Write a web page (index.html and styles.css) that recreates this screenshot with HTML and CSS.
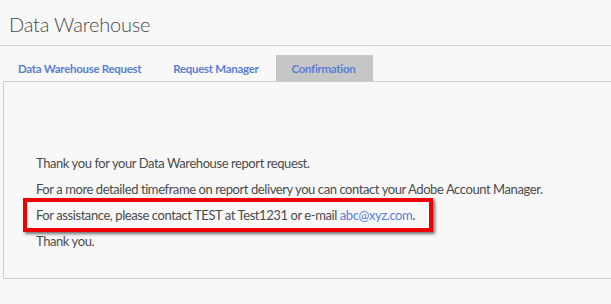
FILE: index.html
```html
<!DOCTYPE html>
<html lang="en">
<head>
    <meta charset="UTF-8">
    <title>Data Warehouse</title>
    <link rel="stylesheet" href="styles.css">
</head>
<body>
    <h1 class="page-title">Data Warehouse</h1>
    <div class="tabs">
        <a class="tab">Data Warehouse Request</a>
        <a class="tab">Request Manager</a>
        <a class="tab active">Confirmation</a>
    </div>
    <div class="panel">
        <p>Thank you for your Data Warehouse report request.</p>
        <p>For a more detailed timeframe on report delivery you can contact your Adobe Account Manager.</p>
        <p class="highlight">For assistance, please contact TEST at Test1231 or e-mail <a href="#" class="mail">abc@xyz.com</a>.</p>
        <p>Thank you.</p>
    </div>
</body>
</html>
```

FILE: styles.css
```css
body {
    margin: 0;
    background-color: #f8f8f8;
    font-family: Lato, "Open Sans", sans-serif;
    color: #4b4b4b;
}
.page-title {
    margin: 0;
    height: 46px;
    padding: 12px 0 0 9px;
    box-sizing: border-box;
    font-size: 20px;
    font-weight: 300;
    letter-spacing: -0.2px;
    border-bottom: 1px solid #d3d3d3;
}
.tabs {
    display: flex;
    height: 26px;
    margin-top: 9px;
    padding-left: 2px;
}
.tab {
    display: block;
    padding: 0 16px;
    line-height: 27px;
    font-size: 11.5px;
    font-weight: bold;
    letter-spacing: -0.3px;
    color: #5b7fd4;
    cursor: pointer;
}
.tab.active {
    margin-left: 1px;
    padding-right: 18px;
    background-color: #c6c6c6;
}
.panel {
    margin-left: 3px;
    margin-right: -2px;
    height: 198px;
    box-sizing: border-box;
    border: 1px solid #cfcfcf;
    padding: 68px 0 0 32px;
    font-size: 13px;
    letter-spacing: -0.42px;
}
.panel p {
    margin: 0;
    line-height: 26px;
}
.highlight {
    position: relative;
}
.highlight::before {
    content: "";
    position: absolute;
    left: -13px;
    top: -4px;
    width: 410px;
    height: 34px;
    box-sizing: border-box;
    border: 4px solid #ee0000;
    box-shadow: 2px 2px 3px rgba(0, 0, 0, 0.55);
}
.mail {
    color: #5b7fd4;
    text-decoration: none;
}
```
